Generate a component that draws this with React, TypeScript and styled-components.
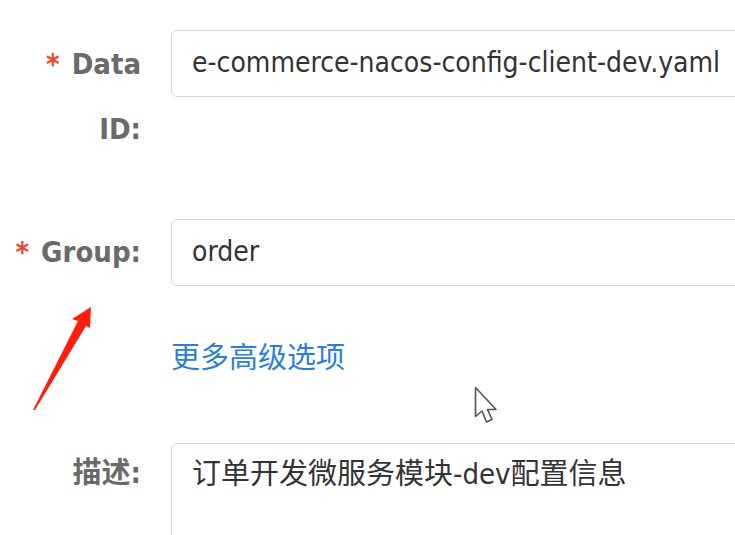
import React from "react";
import styled, { createGlobalStyle } from "styled-components";

const Global = createGlobalStyle`
  html, body { margin: 0; padding: 0; background: #ffffff; }
  body { overflow: hidden; width: 735px; height: 535px; }
`;

const FONT = `"DejaVu Sans Condensed", "Liberation Sans", "Noto Sans CJK SC", sans-serif`;

const Page = styled.div`
  position: relative;
  width: 735px;
  height: 535px;
  overflow: hidden;
  background: #fff;
  font-family: ${FONT};
`;

const Form = styled.div`
  display: flex;
  flex-direction: column;
  padding-top: 30px;
`;

const Item = styled.div<{ $mb: number }>`
  display: grid;
  grid-template-columns: 141px 620px;
  column-gap: 30px;
  align-items: start;
  margin-bottom: ${(p) => p.$mb}px;
`;

const Label = styled.label<{ $lh: number; $pt?: number }>`
  text-align: right;
  font-weight: bold;
  font-size: 29px;
  line-height: ${(p) => p.$lh}px;
  padding-top: ${(p) => p.$pt ?? 0}px;
  color: #6a6a6a;
  font-family: ${FONT};
`;

const Star = styled.span`
  color: #f2462a;
  margin-right: 12px;
`;

const Input = styled.div`
  box-sizing: border-box;
  height: 67px;
  border: 1.5px solid #d4d6da;
  border-radius: 6px;
  padding: 0 20px;
  font-size: 28px;
  line-height: 64px;
  color: #333333;
  white-space: nowrap;
  overflow: hidden;
`;

const TextArea = styled.div`
  box-sizing: border-box;
  height: 200px;
  border: 1.5px solid #d4d6da;
  border-radius: 6px;
  padding: 10px 20px;
  font-size: 29px;
  line-height: 40px;
  color: #333333;
  white-space: nowrap;
`;

const LinkRow = styled.div`
  padding-left: 171px;
  margin-bottom: 52px;
`;

const MoreLink = styled.a`
  font-size: 29px;
  line-height: 65px;
  color: #2b7fd8;
  text-decoration: none;
  cursor: pointer;
`;

const Overlay = styled.svg`
  position: absolute;
  left: 0;
  top: 0;
  pointer-events: none;
`;

export default function App() {
  return (
    <Page>
      <Global />
      <Form>
        <Item $mb={57}>
          <Label $lh={65} $pt={2}>
            <Star>*</Star>Data
            <br />
            ID:
          </Label>
          <Input>e-commerce-nacos-config-client-dev.yaml</Input>
        </Item>
        <Item $mb={40}>
          <Label $lh={67}>
            <Star>*</Star>Group:
          </Label>
          <Input>order</Input>
        </Item>
        <LinkRow>
          <MoreLink>更多高级选项</MoreLink>
        </LinkRow>
        <Item $mb={0}>
          <Label $lh={60}>描述:</Label>
          <TextArea>订单开发微服务模块-dev配置信息</TextArea>
        </Item>
      </Form>
      <Overlay width="735" height="535" viewBox="0 0 735 535">
        <polygon
          points="33,410 78,321 72,319 91,307 90,328 86,326 35,410"
          fill="#ff1e0e"
        />
        <g transform="translate(475.5,387.5)">
          <polygon
            points="0,0 0,29 6.5,23.5 11,34.5 16.5,32 12,22 20.5,22"
            fill="#ffffff"
            stroke="#555555"
            strokeWidth="1.6"
            strokeLinejoin="round"
          />
        </g>
      </Overlay>
    </Page>
  );
}
